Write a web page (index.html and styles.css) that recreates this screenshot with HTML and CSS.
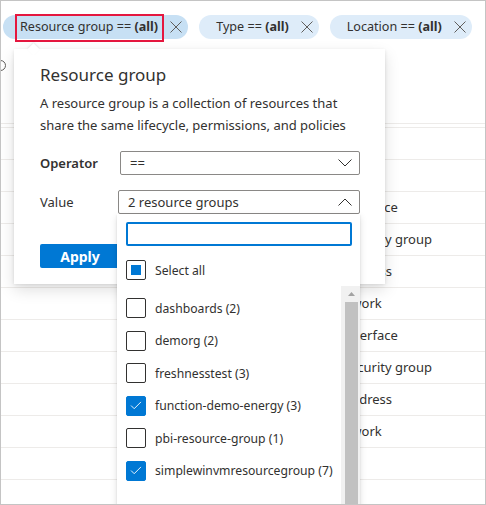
FILE: index.html
```html
<!DOCTYPE html>
<html lang="en">
<head>
<meta charset="utf-8">
<title>Resource group filter</title>
<link rel="stylesheet" href="styles.css">
</head>
<body>
<div class="frame">
  <div class="filters">
    <div class="pill pill-active">
      <span class="pill-text">Resource group == <b>(all)</b></span>
      <svg class="pill-x" viewBox="0 0 12 12"><path d="M0.5 0.5L11.5 11.5M11.5 0.5L0.5 11.5"/></svg>
    </div>
    <div class="pill">
      <span class="pill-text">Type == <b>(all)</b></span>
      <svg class="pill-x" viewBox="0 0 12 12"><path d="M0.5 0.5L11.5 11.5M11.5 0.5L0.5 11.5"/></svg>
    </div>
    <div class="pill">
      <span class="pill-text">Location == <b>(all)</b></span>
      <svg class="pill-x" viewBox="0 0 12 12"><path d="M0.5 0.5L11.5 11.5M11.5 0.5L0.5 11.5"/></svg>
    </div>
  </div>

  <div class="meta">
    <svg class="info" viewBox="0 0 11 11"><circle cx="5.5" cy="5.5" r="5"/><path d="M5.5 4.5V8.5M5.5 2.5V3.4"/></svg>
  </div>

  <div class="rows">
    <div class="row"></div>
    <div class="row"></div>
    <div class="row">Network interface</div>
    <div class="row">Network security group</div>
    <div class="row">Public IP address</div>
    <div class="row">Virtual network</div>
    <div class="row">Network interface</div>
    <div class="row">Network security group</div>
    <div class="row">Public IP address</div>
    <div class="row">Virtual network</div>
    <div class="row"></div>
    <div class="row"></div>
  </div>

  <div class="callout">
    <h2 class="callout-title">Resource group</h2>
    <p class="callout-desc">A resource group is a collection of resources that<br>share the same lifecycle, permissions, and policies</p>
    <div class="field">
      <span class="field-label field-label-strong">Operator</span>
      <div class="select">
        <span>==</span>
        <svg class="chevron" viewBox="0 0 14 8"><path d="M0.5 0.5L7 7L13.5 0.5"/></svg>
      </div>
    </div>
    <div class="field">
      <span class="field-label">Value</span>
      <div class="select select-open">
        <span>2 resource groups</span>
        <svg class="chevron" viewBox="0 0 14 8"><path d="M0.5 7.5L7 1L13.5 7.5"/></svg>
      </div>
    </div>
    <button class="apply">Apply</button>
  </div>

  <div class="dropdown">
    <div class="search"></div>
    <div class="option option-all"><span class="cb cb-partial"></span>Select all</div>
    <div class="list">
      <div class="items">
        <div class="option"><span class="cb"></span>dashboards (2)</div>
        <div class="option"><span class="cb"></span>demorg (2)</div>
        <div class="option"><span class="cb"></span>freshnesstest (3)</div>
        <div class="option"><span class="cb cb-checked"><svg viewBox="0 0 20 20"><path d="M4.5 9.5L8 13L15.5 5.5"/></svg></span>function-demo-energy (3)</div>
        <div class="option"><span class="cb"></span>pbi-resource-group (1)</div>
        <div class="option"><span class="cb cb-checked"><svg viewBox="0 0 20 20"><path d="M4.5 9.5L8 13L15.5 5.5"/></svg></span>simplewinvmresourcegroup (7)</div>
      </div>
      <div class="scrollbar">
        <div class="scroll-up"><svg viewBox="0 0 7 4"><path d="M3.5 0L7 4H0Z"/></svg></div>
        <div class="thumb"></div>
      </div>
    </div>
  </div>
</div>
</body>
</html>
```

FILE: styles.css
```css
* {
  box-sizing: border-box;
}

html,
body {
  margin: 0;
  padding: 0;
  background: #fff;
}

body {
  font-family: "Noto Sans", "Open Sans", sans-serif;
  font-size: 13px;
  color: #323130;
}

.frame {
  position: relative;
  width: 486px;
  height: 505px;
  border: 1px solid #c4c4c4;
  overflow: hidden;
  background: #fff;
}

/* filter pills */
.filters {
  display: flex;
  gap: 11px;
  padding: 14px 0 0 2px;
}

.pill {
  display: flex;
  align-items: center;
  height: 24px;
  border-radius: 12px;
  background: #deecf9;
  padding: 0 6px 0 17px;
  white-space: nowrap;
  font-size: 12.6px;
}

.pill-active {
  background: #c7e0f4;
}

.pill-text {
  position: relative;
  display: block;
  line-height: 24px;
}

.pill-text b {
  font-weight: 700;
}

.pill-active .pill-text::after {
  content: "";
  position: absolute;
  left: -5px;
  right: -6px;
  top: -1px;
  bottom: -3px;
  border: 2px solid #e5173f;
}

.pill-x {
  width: 12px;
  height: 12px;
  margin-left: 12px;
  fill: none;
  stroke: #605e5c;
  stroke-width: 1;
}

/* background table */
.meta {
  height: 85px;
  padding-top: 21px;
  border-bottom: 1px solid #edebe9;
}

.info {
  display: block;
  width: 11px;
  height: 11px;
  margin-left: -6px;
  fill: none;
  stroke: #605e5c;
  stroke-width: 1;
}

.rows {
  margin-top: 3px;
  border-top: 1px solid #edebe9;
}

.row {
  height: 32px;
  line-height: 31px;
  padding-left: 287px;
  border-bottom: 1px solid #edebe9;
  white-space: nowrap;
}

/* callout */
.callout {
  position: absolute;
  left: 13px;
  top: 48px;
  width: 371px;
  padding: 14px 25px 16px 26px;
  background: #fff;
  box-shadow: 0 6.4px 14.4px rgba(0, 0, 0, 0.13), 0 1.2px 3.6px rgba(0, 0, 0, 0.11);
}

.callout::before {
  content: "";
  position: absolute;
  left: 15px;
  top: -4px;
  width: 9px;
  height: 9px;
  background: #fff;
  transform: rotate(45deg);
  box-shadow: -1px -1px 2px rgba(0, 0, 0, 0.08);
}

.callout-title {
  margin: 0;
  font-size: 17px;
  line-height: 24px;
  font-weight: 400;
}

.callout-desc {
  margin: 5px 0 0;
  line-height: 22px;
}

.field {
  display: flex;
  align-items: center;
  height: 24px;
  margin-top: 15px;
}

.field-label {
  width: 80px;
  flex: none;
}

.field-label-strong {
  font-weight: 600;
}

.select {
  display: flex;
  align-items: center;
  justify-content: space-between;
  width: 240px;
  height: 24px;
  padding: 0 7px 0 9px;
  border: 1px solid #8a8886;
  border-radius: 2px;
}

.select-open {
  width: 242px;
  margin-left: -2px;
}

.chevron {
  width: 14px;
  height: 8px;
  fill: none;
  stroke: #323130;
  stroke-width: 1;
}

.apply {
  display: block;
  width: 80px;
  height: 24px;
  margin-top: 30px;
  padding: 0;
  border: none;
  border-radius: 2px;
  background: #0078d4;
  color: #fff;
  font-family: inherit;
  font-size: 14px;
  font-weight: 700;
}

/* dropdown list */
.dropdown {
  position: absolute;
  left: 116px;
  top: 213px;
  bottom: -20px;
  width: 243px;
  display: flex;
  flex-direction: column;
  background: #fff;
  box-shadow: 0 3.2px 7.2px rgba(0, 0, 0, 0.13), 0 0.6px 1.8px rgba(0, 0, 0, 0.11);
}

.search {
  width: 226px;
  height: 24px;
  margin: 8px 0 0 9px;
  border: 2px solid #0078d4;
  border-radius: 2px;
  flex: none;
}

.option {
  display: flex;
  align-items: center;
  height: 32.5px;
  padding-left: 9px;
  white-space: nowrap;
  font-size: 12.2px;
}

.option-all {
  height: 32px;
  margin-top: 8px;
  flex: none;
}

.cb {
  display: flex;
  align-items: center;
  justify-content: center;
  width: 20px;
  height: 20px;
  margin-right: 9px;
  border: 1px solid #323130;
  border-radius: 2px;
  flex: none;
}

.cb-partial::after {
  content: "";
  width: 10px;
  height: 10px;
  background: #0078d4;
}

.cb-checked {
  background: #0078d4;
  border-color: #0078d4;
}

.cb-checked svg {
  width: 20px;
  height: 20px;
  fill: none;
  stroke: #fff;
  stroke-width: 1;
}

.list {
  display: flex;
  flex: 1;
  min-height: 0;
}

.items {
  flex: 1;
  padding-top: 6px;
}

.scrollbar {
  width: 19px;
  flex: none;
  background: #f1f1f1;
}

.scroll-up {
  display: flex;
  align-items: center;
  justify-content: center;
  height: 16px;
  padding-left: 2px;
}

.scroll-up svg {
  width: 7px;
  height: 4px;
  fill: #a3a3a3;
}

.thumb {
  width: 13px;
  height: 400px;
  margin-left: 4px;
  background: #c1c1c1;
}
```
